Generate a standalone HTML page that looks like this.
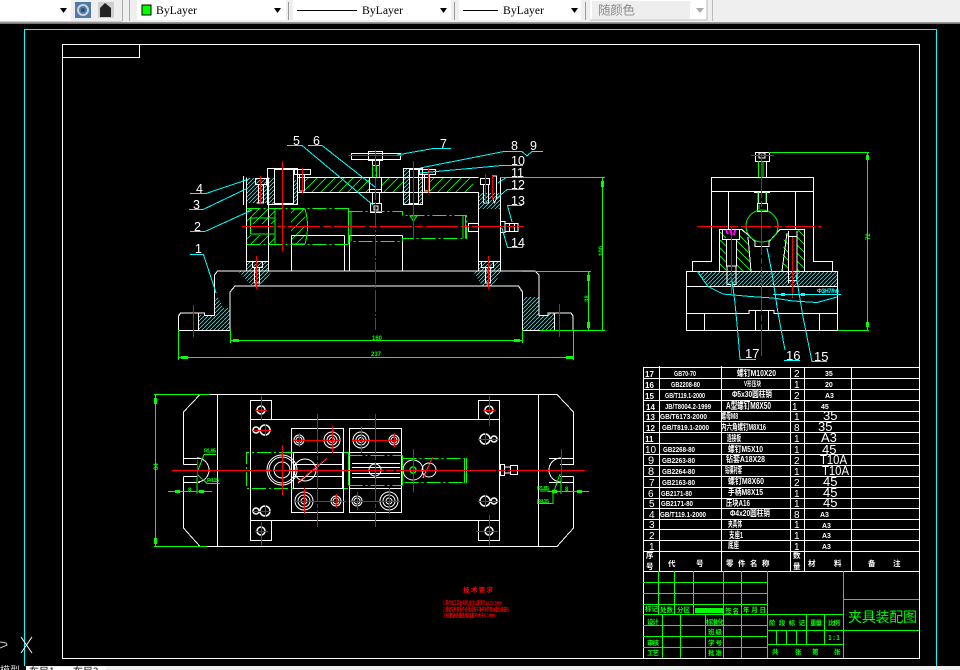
<!DOCTYPE html>
<html><head><meta charset="utf-8"><title>夹具装配图</title>
<style>
html,body{margin:0;padding:0;background:#000}
#p{position:relative;width:960px;height:670px;overflow:hidden;background:#000}
svg{position:absolute;left:0;top:0;font-family:"Liberation Sans","Noto Sans CJK SC",sans-serif}
.l{fill:none;shape-rendering:crispEdges}
.w{stroke:#fff;fill:none;shape-rendering:crispEdges}
.g{stroke:#0f0;fill:none;shape-rendering:crispEdges}
.c{stroke:#0ff;fill:none;shape-rendering:crispEdges}
.r{stroke:#f00;fill:none;shape-rendering:crispEdges}
.tw text{fill:#fff;stroke:none}
.tg text{fill:#0f0;stroke:none}
</style></head><body><div id="p">
<svg width="960" height="670" viewBox="0 0 960 670" xmlns="http://www.w3.org/2000/svg">
<defs>
<pattern id="hc" width="4" height="4" patternUnits="userSpaceOnUse"><path d="M0 4L4 0" stroke="#0ff" stroke-width=".8"/></pattern>
<pattern id="hg" width="9" height="9" patternUnits="userSpaceOnUse"><path d="M0 9L9 0" stroke="#0f0" stroke-width=".9"/></pattern>
<pattern id="hg2" width="8" height="8" patternUnits="userSpaceOnUse"><path d="M0 0L8 8" stroke="#0f0" stroke-width=".9"/></pattern>
</defs>

<!-- toolbar -->
<rect x="0" y="0" width="960" height="22" fill="#efefef"/>
<rect x="0" y="22" width="960" height="1" fill="#999"/>
<rect x="0" y="23" width="960" height="1" fill="#777"/>
<rect x="0" y="21" width="122" height="1" fill="#ccc"/>
<rect x="0" y="0" width="71" height="21" fill="#fff"/>
<path d="M60 8h7l-3.500 5z" fill="#000"/>
<rect x="75" y="2" width="16" height="16" fill="#4f7aa8"/>
<circle cx="83" cy="10" r="5" fill="none" stroke="#c9d3de" stroke-width="2"/><circle cx="83" cy="10" r="2" fill="#2b4d78"/>
<rect x="98" y="2" width="16" height="16" fill="#cfcfcf"/>
<path d="M100 17V8l5-5 6 5v9z" fill="#222"/>
<rect x="122" y="0" width="1" height="21" fill="#aaa"/><rect x="129" y="0" width="1" height="21" fill="#aaa"/>
<rect x="137" y="0" width="149" height="20" fill="#fff"/>
<rect x="142" y="5" width="9" height="10" fill="#0f0" stroke="#000" stroke-width="1" shape-rendering="crispEdges"/>
<text x="156" y="14" font-family="Liberation Serif" font-size="11.500" textLength="41" lengthAdjust="spacingAndGlyphs" fill="#000">ByLayer</text>
<path d="M274 8h7l-3.500 5z" fill="#000"/>
<rect x="288" y="2" width="1" height="18" fill="#999"/>
<rect x="293" y="0" width="158" height="20" fill="#fff"/>
<rect x="297" y="10" width="60" height="1" fill="#000"/>
<text x="362" y="14" font-family="Liberation Serif" font-size="11.500" textLength="41" lengthAdjust="spacingAndGlyphs" fill="#000">ByLayer</text>
<path d="M440 8h7l-3.500 5z" fill="#000"/>
<rect x="454" y="2" width="1" height="18" fill="#999"/>
<rect x="459" y="0" width="122" height="20" fill="#fff"/>
<rect x="463" y="10" width="35" height="1" fill="#000"/>
<text x="503" y="14" font-family="Liberation Serif" font-size="11.500" textLength="41" lengthAdjust="spacingAndGlyphs" fill="#000">ByLayer</text>
<path d="M571 8h7l-3.500 5z" fill="#000"/>
<rect x="585" y="2" width="1" height="18" fill="#999"/>
<rect x="590" y="0" width="117" height="20" fill="#fff" stroke="#bbb" stroke-width="0"/>
<rect x="592" y="1" width="98" height="18" fill="#eee"/>
<text x="598" y="14.500" font-size="12.500" fill="#8a8a8a" textLength="37" font-family="Noto Sans CJK SC">随颜色</text>
<path d="M696 8h8l-4 5z" fill="#aaa"/>
<path d="M707 0v20H590" class="l" stroke="#bbb"/><path d="M712.500 0v21" class="l" stroke="#bbb"/>

<!-- frames -->
<path class="c" d="M24.500 670V29.500H936.500V670"/>
<g class="w">
<path d="M62.500 44.500H919.500V658.500H62.500Z"/>
<path d="M62.500 57.500H139.500V44.500"/>
</g>
<path d="M0 642l6 1 1 2-7 3" fill="none" stroke="#ccc"/>
<path d="M21 637l11 16M32 637l-11 16" stroke="#fff" fill="none"/>

<!-- FRONT VIEW hatches -->
<path fill="url(#hc)" d="M198 330V315h16V297h4l5 11h7v22z"/>
<path fill="url(#hc)" d="M522 330V302l4-5h13v18h9v-2h6v17z"/>
<path fill="url(#hc)" d="M238 271h34l-10 15h-10zM473 271h29l-9 15h-11zM247 262h21v9h-21zM479 262h21v9h-21z"/>
<path fill="url(#hc)" d="M247 178h21v25h-21zM479 193h21v16h-21zM403 168h6v36h-6zM293 180h4v24h-4zM267 178h7v26h-7zM418 178h4v26h-4z"/>
<path fill="url(#hg)" d="M305 178h64v14h-64zM382 178h21v14h-21zM430 178h43v14h-43zM247 209h28v15h-28zM247 235h28v9h-28zM291 209h14v35h-14z"/>
<!-- FRONT VIEW outline -->
<g class="w">
<path d="M178.500 330.500V316l2-3h24v2.500h10V275l3-4H535l4 4v40.500h9V313h23l2 3v14.500H522.500V292l-4-6H235l-5 6v38.500H178.500"/>
<path d="M198.500 313V330M554.500 313V330"/>
<path d="M246.500 177.500V271M268.500 177.500V271M478.500 192V271M500.500 177V271M246.500 261.500H268M478 261.500H500"/>
<path d="M291.500 235.500V271M344.500 235.500V271M349.500 235.500V271M402.500 235.500V271M291.500 235.500H344.500M349.500 235.500H402.500"/>
<path d="M297.500 177.500H478.500M297.500 192.500H478.500"/>
<rect x="267.500" y="168.500" width="30" height="36"/><rect x="274.500" y="169.500" width="19" height="34"/>
<rect x="403.500" y="168.500" width="19" height="36"/><rect x="409.500" y="169.500" width="9" height="34"/>
<rect x="294.500" y="169.500" width="16" height="5"/><path d="M299.500 174V191H304.500V174"/>
<rect x="419.500" y="169.500" width="16" height="5"/><path d="M424.500 174V191H429.500V174"/>
<rect x="351.500" y="153.500" width="49" height="6"/><rect x="368.500" y="151.500" width="14" height="9"/>
<rect x="372.500" y="160.500" width="7" height="5"/>
<rect x="369.500" y="177.500" width="12" height="15"/><rect x="369.500" y="189.500" width="12" height="3"/>
<path d="M372.500 192V203M379.500 192V203"/>
<rect x="370.500" y="203.500" width="11" height="9"/><rect x="374" y="206" width="4" height="4"/>
<rect x="255.500" y="178.500" width="11" height="6"/><path d="M258.500 185V203H263.500V185M256.500 203H264"/>
<rect x="252.500" y="261.500" width="10" height="6"/><path d="M254.500 268V283H259.500V268"/>
<rect x="481.500" y="261.500" width="12" height="6"/><path d="M485.500 268V283H490.500V268"/>
<rect x="480.500" y="178.500" width="9" height="6"/><path d="M483.500 185V203H488.500V185"/><path d="M492.500 176V198l2 5 2-5V176Z"/>
<rect x="468.500" y="223.500" width="10" height="8"/>
<path d="M500 221.500H505V232.500H500M505 223.500H518V231.500H505M509.500 223V232M514.500 223V232"/>
<path d="M243.500 176V205"/>
</g>
<g class="g">
<path d="M372.500 165V177M379.500 165V177M376.500 165V177"/>
<path d="M246.500 208.500H348.500M246.500 244.500H348.500" stroke-dasharray="14 3 2 3"/>
<path d="M348.500 211.500H402.500V215.500H466.500V238.500H402.500V241.500H348.500V244M348.500 208V211" stroke-dasharray="14 3 2 3"/>
<path d="M465.500 215V238M463 215V238"/>
<path d="M250.500 218V234M250.500 218H275V209M250.500 234H275V244M275 218V234M291.500 209H305M291.500 244H305M305 209Q310 226 305 244"/>
<path d="M348.500 211V241M351 211V241"/>
<path d="M410 216h7l-3.500 5z"/>
<!-- dimensions -->
<path d="M230.500 330V343M522.500 330V343M230 340.500H522M178.500 330V360M573.500 330V360M178 357.500H573"/>
<path d="M500 177.500H605M602.500 177V331M522 271.500H591M588.500 271V331M540 330.500H605"/>
</g>
<path d="M233 339h6v3h-6zM514 339h6v3h-6zM181 356h7v3h-7zM566 356h7v3h-7zM587 275h3v6h-3zM587 322h3v6h-3zM601 181h3v6h-3z" fill="#0f0"/>
<g class="r">
<path d="M242 226.500H524" stroke-dasharray="32 3 8 3"/>
<path d="M375.500 150V330" stroke-dasharray="22 2 2 2"/>
<path d="M282.500 161V251M413.500 161V240" />
<path d="M193.500 305V337M559.500 304V337M256.500 256V289M488.500 256V289M260.500 176V204M485.500 174V203M302.500 168V193M428.500 168V193"/>
<path d="M348 155.500H402M492.500 176V200"/>
</g>
<g class="c">
<path d="M190 254.500H203.500L216 293"/>
<path d="M190 231.500H205L252 210"/>
<path d="M189 209.500H203L248 188"/>
<path d="M190 193.500H206L249 179"/>
<path d="M287 145.500H302L373 205"/>
<path d="M308 145.500H322L375 187"/>
<path d="M397 155L433 148.500H451"/>
<path d="M420 168L504 151.500H522L527 156L532 151.500H543"/>
<path d="M420 173L502 165.500H523"/>
<path d="M498 183L506 177.500H522"/>
<path d="M497 198L507 189.500H523"/>
<path d="M522 205.500H507.500L512 222"/>
<path d="M502 228L507.500 247.500H523"/>
</g>
<g class="tw" font-size="12.500">
<text x="195" y="253">1</text><text x="194" y="231">2</text><text x="193" y="209">3</text><text x="196" y="193">4</text>
<text x="293" y="145">5</text><text x="313" y="145">6</text><text x="440" y="148">7</text><text x="511" y="150">8</text><text x="530" y="150">9</text>
<text x="511" y="165">10</text><text x="511" y="177">11</text><text x="511" y="189">12</text><text x="511" y="205">13</text><text x="511" y="247">14</text>
</g>
<g class="tg" font-size="7" font-weight="bold">
<text x="372" y="340" font-size="6">160</text><text x="371" y="356" font-size="6">237</text>
<text x="586" y="302" font-size="6" transform="rotate(-90 586 302) translate(0 3)">38</text>
<text x="600" y="256" font-size="6" transform="rotate(-90 600 256) translate(0 3)">100</text>
</g>

<!-- SIDE VIEW -->
<path fill="url(#hc)" d="M697 271H838V286H708z"/>
<path fill="url(#hg2)" d="M720 230h6v41h-6zM737 240V271H751L748 237L742 230H740V240ZM797 230h7v41h-7zM784 234h4v37h-6z"/>
<g class="w">
<rect x="755.500" y="152.500" width="14" height="9"/><rect x="759" y="153" width="6" height="5"/>
<path d="M758.500 161V177M766.500 161V177"/>
<rect x="711.500" y="177.500" width="102" height="14"/>
<path d="M711.500 192V261.500H692.500V271M813.500 192V261.500H832.500V271"/>
<path d="M728.500 192V229M795.500 192V229"/>
<rect x="686.500" y="271.500" width="151" height="59"/>
<path d="M686 313.500H749V310.500H774V313.500H838M704.500 313V330M755.500 310V330M768.500 310V330M819.500 313V330M686 286.500H838"/>
<path d="M754 192.500H770M758.500 192V203M766.500 192V203"/>
<rect x="757.500" y="203.500" width="10" height="8"/>
<path d="M719.500 271V229.500H742L755 241.500V246.500H769V241.500L780 229.500H804.500V271"/>
<path d="M748 237L751 271M787 233L782 271"/>
<rect x="722.500" y="229.500" width="17" height="10"/>
<path d="M726.500 240V266H736.500V240M727 266V284.500H736V266"/>
<path d="M788.500 231V283M797 231V283M788 236.500H797M788 280.500H797"/>
</g>
<circle cx="762" cy="226" r="16" fill="none" stroke="#0f0"/>
<path class="g" d="M758.500 161V177M763 161V177M758 192V203M766 192V203"/>
<path class="g" d="M759 205V209"/>
<g class="r">
<path d="M697 226.500H821" stroke-dasharray="30 3 8 3"/>
<path d="M761.500 153V356" stroke-dasharray="45 3 6 3"/>
<path d="M751 155.500H774"/>
<path d="M731.500 226V295M792.500 237V298"/>
</g>
<path d="M726 230l2 4M730 230l2 5M735 230l-1 5" stroke="#f0f" fill="none" stroke-width="2"/>
<g class="c">
<path d="M697 271L708 286.500L723 294L750 296.500L773 298L793 301L817 302.500L837 297"/>
<path d="M732 280L735 303L738 335L740 359.500H756"/>
<path d="M767 248L772 273L778 313L785 350M784 360.500H800"/>
<path d="M796 275L803 317L812 361.500H827"/>
<path d="M773 294.500H841"/>
</g>
<path d="M781 293h4v3h-4zM801 293h4v3h-4z" fill="#0ff"/>
<text x="817" y="293" font-size="6" font-weight="bold" fill="#0ff" textLength="22">Φ3H7/h6</text>
<g class="g"><path d="M769 152.500H869M867.500 152V331M838 330.500H869"/></g>
<path d="M866 155h3v5h-3zM866 322h3v5h-3z" fill="#0f0"/>
<text x="866" y="244" font-size="6" font-weight="bold" fill="#0f0" transform="rotate(-90 866 240)">72</text>
<g class="tw" font-size="13"><text x="745" y="358">17</text><text x="786" y="360">16</text><text x="814" y="361">15</text></g>

<!-- TOP VIEW -->
<g class="w">
<path d="M217.500 394.500H200L183.500 412V458.500H200M183.500 464.500V458.500M183.500 464.500H197M183.500 476.500H197M183.500 476.500V482.500H200M183.500 482.500V528L200 546.500H217.500"/>
<path d="M217.500 394V546.500M538.500 394V546.500"/>
<path d="M217 394.500H557L573.500 412V458.500H549M573.500 458.500V464.500H560M573.500 476.500H560M573.500 476.500V482.500H549M573.500 482.500V528L557 546.500H217"/>
<path d="M197 458A12 12 0 0 1 197 482"/>
<path d="M561 458A12 12 0 0 0 561 482"/>
<rect x="250.500" y="419.500" width="249" height="101"/>
<rect x="250.500" y="400.500" width="21" height="19"/><rect x="478.500" y="400.500" width="21" height="19"/>
<rect x="250.500" y="520.500" width="21" height="20"/><rect x="478.500" y="520.500" width="21" height="20"/>
<rect x="291.500" y="428.500" width="52" height="84"/><rect x="349.500" y="428.500" width="52" height="84"/>
<rect x="293.500" y="452.500" width="49" height="36"/><path d="M293 464.500H343M293 476.500H343"/>
<path d="M349 452.500H401M349 488.500H401M352 467.500H400M352 473.500H400M352 463.500H400M352 477.500H400"/>
<rect x="500.500" y="464.500" width="4" height="11"/><rect x="510.500" y="465.500" width="7" height="9"/><path d="M504 467H511M504 473H511"/>
<path d="M326 459L298 483"/><path d="M433 457L423 478"/>
</g>
<g fill="none" stroke="#fff" stroke-width="1.500">
<circle cx="261" cy="410" r="4"/><circle cx="261" cy="531" r="4"/><circle cx="489" cy="410" r="4"/><circle cx="489" cy="531" r="4"/>
<circle cx="265" cy="430" r="5"/><circle cx="256" cy="430" r="3"/><circle cx="265" cy="511" r="5"/><circle cx="256" cy="511" r="3"/>
<circle cx="485" cy="439" r="5"/><circle cx="494" cy="439" r="3"/><circle cx="485" cy="501" r="5"/><circle cx="494" cy="501" r="3"/>
</g>
<g fill="none" stroke="#fff">
<circle cx="299" cy="440" r="5"/><circle cx="299" cy="440" r="3"/>
<circle cx="332" cy="440" r="8"/><circle cx="332" cy="440" r="5"/><circle cx="332" cy="440" r="2.500"/>
<circle cx="304" cy="501" r="9"/><circle cx="304" cy="501" r="6"/><circle cx="304" cy="501" r="3"/>
<circle cx="336" cy="501" r="5"/><circle cx="336" cy="501" r="3"/>
<circle cx="361" cy="440" r="8"/><circle cx="361" cy="440" r="5"/><circle cx="361" cy="440" r="2.500"/>
<circle cx="394" cy="440" r="5"/><circle cx="394" cy="440" r="3"/>
<circle cx="357" cy="501" r="5"/><circle cx="357" cy="501" r="3"/>
<circle cx="389" cy="501" r="9"/><circle cx="389" cy="501" r="6"/><circle cx="389" cy="501" r="3"/>
<circle cx="282" cy="470" r="15"/><circle cx="282" cy="470" r="13"/><circle cx="282" cy="470" r="8"/>
<circle cx="305" cy="470" r="11"/><circle cx="375" cy="470" r="6"/>
<circle cx="413" cy="470" r="10"/><circle cx="429" cy="470" r="7"/>
</g>
<circle cx="413" cy="470" r="3" fill="none" stroke="#0f0" stroke-width="1.500"/>
<g class="g">
<path d="M293 452.500H246.500V488.500H293" stroke-dasharray="14 3 2 3"/>
<path d="M344 452.500H348.500V485M344 488.500H348" />
<path d="M348.500 455.500H402.500M348.500 485.500H402.500" stroke-dasharray="14 3 2 3"/>
<path d="M402.500 458.500H464.500V482.500H402.500" stroke-dasharray="14 3 2 3"/>
<path d="M464.500 458V483M466.500 458V483"/>
<path d="M402.500 455V485"/>
<path d="M210 394.500H154M207 546.500H154M155.500 394V546M168 491.500H212M548 491.500H589M197 478V494M561 478V494"/>
<path d="M198 470L204 454.500H216M198 475L207 483.500H220M560 474L553 494L553 503.500H537M540 491H550"/>
</g>
<path d="M154 398h3v6h-3zM154 538h3v6h-3zM175 490h5v3h-5zM199 490h5v3h-5zM552 490h5v3h-5zM577 490h5v3h-5z" fill="#0f0"/>
<g class="tg" font-size="5.500" font-weight="bold">
<text x="204" y="452.500" textLength="12">R1.85</text><text x="207" y="482" textLength="12">R4.15</text>
<text x="537" y="490" textLength="12">R1.85</text><text x="537" y="503" textLength="12">R4.15</text>
<text x="188" y="492" font-size="6">8</text><text x="565" y="491" font-size="6">8</text>
<text x="155" y="473" font-size="6" transform="rotate(-90 155 470)">84</text>
</g>
<g class="r">
<path d="M172 470.500H585" stroke-dasharray="100 2 8 2"/>
<path d="M317.500 414V527M375.500 414V527" stroke-dasharray="40 2 4 2"/>
<path d="M282.500 445V495M413.500 449V492M561.500 449V492M197.500 460V493"/>
<path d="M261.500 396V420M255 410.500H267M261.500 522V545M255 531.500H268M489.500 396V426M483 410.500H496M489.500 515V545M476 531.500H498"/>
<path d="M253 430.500H271M265.500 424V436M253 511.500H271M265.500 505V517M478 439.500H499M485.500 433V445M478 501.500H499M485.500 495V507"/>
<path d="M299.500 433V447M293 440.500H340M332.500 426V453M304.500 488V514M294 501.500H346M336.500 494V508"/>
<path d="M361.500 426V453M352 440.500H398M394.500 433V447M357.500 492V510M350 501.500H400M389.500 488V514"/>
<path d="M327 458L298 482" /><path d="M433 457L424 477"/>
</g>

<!-- BOM -->
<g class="w">
<path d="M643.500 367.500H919.500M643.500 378.500H919M643.500 389.500H919M643.500 400.500H919M643.500 411.500H919M643.500 421.500H919M643.500 432.500H919M643.500 443.500H919M643.500 454.500H919M643.500 465.500H919M643.500 476.500H919M643.500 487.500H919M643.500 498.500H919M643.500 508.500H919M643.500 519.500H919M643.500 529.500H919M643.500 540.500H919M643.500 551.500H919M643.500 571.500H919"/>
<path d="M643.500 367V658M659.500 366V571M721.500 366V571M790.500 367V571M804.500 367V571M851.500 367V571M919.500 367V658"/>
</g>
<g class="tw" font-size="9" font-weight="bold">
<text x="645" y="377" font-size="8">17</text><text x="645" y="388" font-size="8">16</text><text x="645" y="399" font-size="8">15</text><text x="646" y="410" font-size="8">14</text><text x="646" y="420" font-size="8">13</text><text x="646" y="431" font-size="8">12</text><text x="645" y="442" font-size="8">11</text>
<text x="645" y="453" font-size="10" font-weight="normal">10</text><text x="648" y="464" font-size="11" font-weight="normal">9</text><text x="648" y="475" font-size="11" font-weight="normal">8</text><text x="649" y="486" font-size="10" font-weight="normal">7</text><text x="648" y="497" font-size="10" font-weight="normal">6</text><text x="649" y="507" font-size="10" font-weight="normal">5</text><text x="649" y="518" font-size="10" font-weight="normal">4</text><text x="649" y="528" font-size="10" font-weight="normal">3</text><text x="649" y="539" font-size="10" font-weight="normal">2</text><text x="649" y="550" font-size="10" font-weight="normal">1</text>
</g>
<g class="tw" font-size="7" font-weight="bold">
<text x="674" y="376" textLength="22" lengthAdjust="spacingAndGlyphs">GB70-70</text>
<text x="671" y="387" textLength="29" lengthAdjust="spacingAndGlyphs">GB2208-80</text>
<text x="665" y="398" textLength="40" lengthAdjust="spacingAndGlyphs">GB/T119.1-2000</text>
<text x="665" y="409" textLength="46" lengthAdjust="spacingAndGlyphs">JB/T8004.2-1999</text>
<text x="660" y="419" textLength="47" lengthAdjust="spacingAndGlyphs">GB/T6173-2000</text>
<text x="662" y="430" textLength="47" lengthAdjust="spacingAndGlyphs">GB/T819.1-2000</text>
<text x="663" y="452" textLength="32" lengthAdjust="spacingAndGlyphs">GB2268-80</text>
<text x="662" y="463" textLength="33" lengthAdjust="spacingAndGlyphs">GB2263-80</text>
<text x="662" y="474" textLength="33" lengthAdjust="spacingAndGlyphs">GB2264-80</text>
<text x="662" y="485" textLength="33" lengthAdjust="spacingAndGlyphs">GB2163-80</text>
<text x="661" y="496" textLength="31" lengthAdjust="spacingAndGlyphs">GB2171-80</text>
<text x="661" y="506" textLength="32" lengthAdjust="spacingAndGlyphs">GB2171-80</text>
<text x="660" y="517" textLength="46" lengthAdjust="spacingAndGlyphs">GB/T119.1-2000</text>
</g>
<g class="tw" font-size="8.500" font-weight="bold" font-family="Liberation Sans,Noto Sans CJK SC,sans-serif">
<text x="737" y="376" textLength="39" lengthAdjust="spacingAndGlyphs">螺钉M10X20</text>
<text x="744" y="386" font-size="7" textLength="17" lengthAdjust="spacingAndGlyphs">V形压块</text>
<text x="732" y="397" textLength="40" lengthAdjust="spacingAndGlyphs">Φ5x30圆柱销</text>
<text x="726" y="409" font-size="10" textLength="45" lengthAdjust="spacingAndGlyphs">A型螺钉M8X50</text>
<text x="721" y="419" textLength="17" lengthAdjust="spacingAndGlyphs">螺母M8</text>
<text x="721" y="430" textLength="45" lengthAdjust="spacingAndGlyphs">内六角螺钉M8X16</text>
<text x="727" y="441" textLength="14" lengthAdjust="spacingAndGlyphs">连接板</text>
<text x="728" y="452" textLength="35" lengthAdjust="spacingAndGlyphs">螺钉M5X10</text>
<text x="726" y="462" textLength="39" lengthAdjust="spacingAndGlyphs">钻套A18X28</text>
<text x="725" y="473" textLength="17" lengthAdjust="spacingAndGlyphs">钻模衬套</text>
<text x="728" y="484" textLength="36" lengthAdjust="spacingAndGlyphs">螺钉M8X60</text>
<text x="728" y="495" textLength="35" lengthAdjust="spacingAndGlyphs">手柄M8X15</text>
<text x="726" y="506" textLength="24" lengthAdjust="spacingAndGlyphs">压块A16</text>
<text x="730" y="516" textLength="40" lengthAdjust="spacingAndGlyphs">Φ4x20圆柱销</text>
<text x="728" y="527" textLength="14" lengthAdjust="spacingAndGlyphs">夹具体</text>
<text x="729" y="538" textLength="14" lengthAdjust="spacingAndGlyphs">支座1</text>
<text x="728" y="548" textLength="11" lengthAdjust="spacingAndGlyphs">底座</text>
</g>
<g class="tw" font-size="10">
<text x="794" y="377">2</text><text x="794" y="388">1</text><text x="794" y="399">2</text><text x="792" y="410">1</text><text x="794" y="420">1</text><text x="794" y="431">8</text><text x="794" y="442">1</text><text x="794" y="453">1</text><text x="794" y="464">2</text><text x="794" y="475">1</text><text x="794" y="486">2</text><text x="794" y="497">1</text><text x="794" y="507">1</text><text x="794" y="518">8</text><text x="794" y="528">1</text><text x="794" y="539">1</text><text x="794" y="550">1</text>
</g>
<g class="tw" font-size="7" font-weight="bold">
<text x="825" y="376">35</text><text x="825" y="387">20</text><text x="825" y="398">A3</text><text x="821" y="409">45</text>
<text x="820" y="517">A3</text><text x="822" y="528">A3</text><text x="822" y="538">A3</text><text x="822" y="549">A3</text>
</g>
<g class="tw" font-size="13">
<text x="823" y="420">35</text><text x="818" y="431">35</text><text x="821" y="442">A3</text><text x="822" y="454">45</text>
<text x="820" y="464" textLength="27" lengthAdjust="spacingAndGlyphs">T10A</text><text x="822" y="475" textLength="27" lengthAdjust="spacingAndGlyphs">T10A</text>
<text x="823" y="486">45</text><text x="823" y="497">45</text><text x="823" y="507">45</text>
</g>
<g class="tw" font-size="7.500" font-weight="bold" font-family="Noto Sans CJK SC,sans-serif">
<text x="646" y="558">序</text><text x="646" y="569">号</text>
<text x="668" y="566">代</text><text x="696" y="566">号</text>
<text x="726" y="566">零</text><text x="738" y="566">件</text><text x="750" y="566">名</text><text x="762" y="566">称</text>
<text x="793" y="558">数</text><text x="793" y="569">量</text>
<text x="808" y="566">材</text><text x="834" y="566">料</text>
<text x="868" y="566">备</text><text x="893" y="566">注</text>
</g>

<!-- title block -->
<g class="g">
<path d="M643 582.500H767M643 593.500H767M643 604.500H767M643 614.500H843M643 625.500H767M643 636.500H767M643 647.500H767"/>
<path d="M658.500 571V614M674.500 571V614M693.500 571V614M723.500 571V658M741.500 571V658M767.500 571V658"/>
<path d="M662.500 614V658M680.500 614V658M705.500 614V658"/>
<path d="M843.500 571V658M843 599.500H919M767 630.500H919M767 644.500H843"/>
<path d="M806.500 614V644M824.500 614V644M776.500 630V644M786.500 630V644M796.500 630V644"/>
</g>
<rect x="695" y="608" width="28" height="5" fill="#0f0"/>
<path class="w" d="M643 658.500H919.500"/>
<text x="848" y="622" font-size="14" fill="#0f0" textLength="69" font-family="Noto Sans CJK SC">夹具装配图</text>
<g class="tg" font-size="6.500" font-weight="bold" font-family="Noto Sans CJK SC,sans-serif">
<text x="645" y="611">标记</text><text x="660" y="612" textLength="13">处数</text><text x="677" y="612" textLength="13">分区</text>
<text x="725" y="613" textLength="14">签名</text><text x="743" y="612" textLength="23">年 月 日</text>
<text x="647" y="624" textLength="12">设计</text><text x="706" y="624" textLength="18">标准化</text>
<text x="708" y="634" textLength="14">班级</text>
<text x="647" y="645" textLength="12">审核</text><text x="708" y="645" textLength="14">学号</text>
<text x="647" y="655" textLength="12">工艺</text><text x="708" y="655" textLength="14">批准</text>
<text x="769" y="625" textLength="36">阶段标记</text><text x="810" y="625" textLength="12">重量</text><text x="828" y="625" textLength="12">比例</text>
<text x="828" y="640" textLength="12">1:1</text>
<text x="772" y="654">共</text><text x="795" y="654">张</text><text x="812" y="654">第</text><text x="834" y="654">张</text>
</g>

<!-- red notes -->
<g fill="#f00" font-weight="bold" font-family="Noto Sans CJK SC,sans-serif">
<text x="463" y="592" font-size="6.500" textLength="30">技术要求</text>
<text x="443" y="605" font-size="5.500" textLength="59" lengthAdjust="spacingAndGlyphs">1.零件加工后去毛刺,未注公差按IT14,±0.5mm</text>
<text x="443" y="611.500" font-size="5.500" textLength="66" lengthAdjust="spacingAndGlyphs">2.装配前所有零件必须清洗干净并涂防锈油脂后再进行</text>
<text x="443" y="617.500" font-size="5.500" textLength="53" lengthAdjust="spacingAndGlyphs">3.钻套轴线垂直度误差不大于0.1mm.</text>
</g>

<!-- tabs -->
<rect x="0" y="666" width="960" height="4" fill="#efefef"/>
<rect x="0" y="666" width="26" height="4" fill="#000"/>
<rect x="26" y="667" width="80" height="3" fill="#fff"/>
<text x="0" y="674" font-size="10" fill="#ddd" font-family="Noto Sans CJK SC">模型</text>
<text x="29" y="675" font-size="10" fill="#000" font-family="Noto Sans CJK SC">布局1</text>
<text x="73" y="675" font-size="10" fill="#000" font-family="Noto Sans CJK SC">布局2</text>
</svg>
</div></body></html>
